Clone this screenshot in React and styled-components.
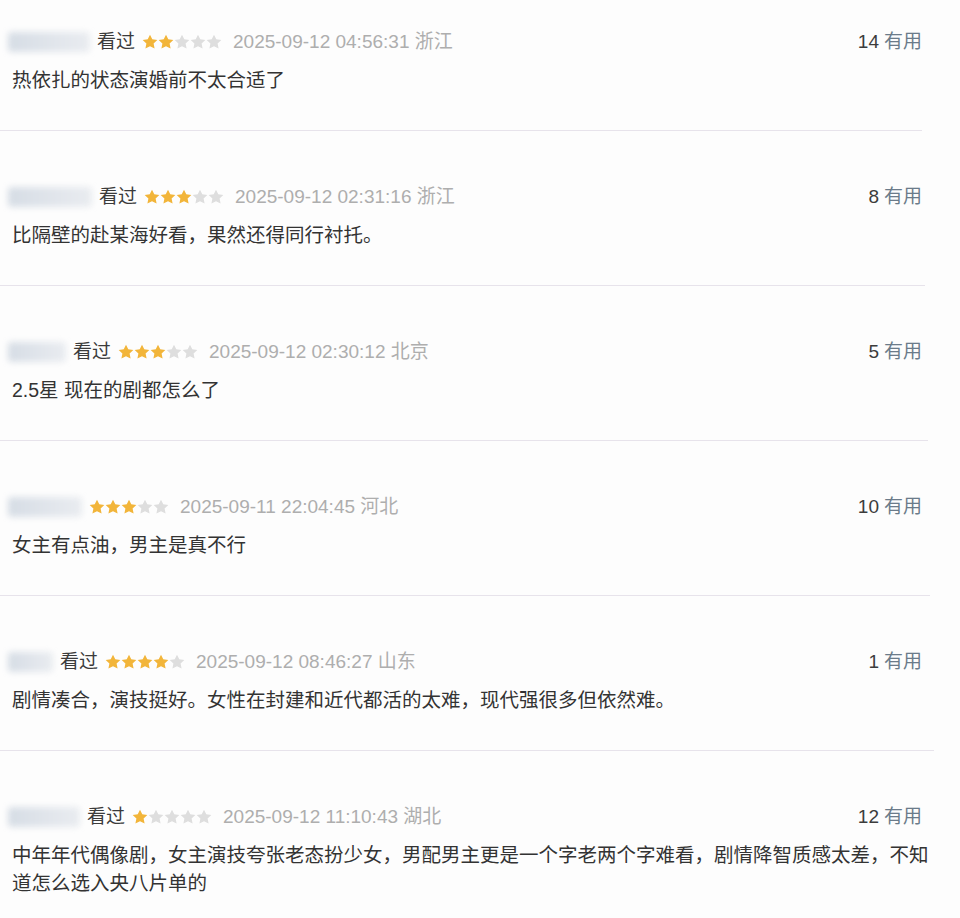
import React from "react";
import styled, { createGlobalStyle } from "styled-components";

const Global = createGlobalStyle`
  html, body { margin: 0; padding: 0; background: #fdfdfd; }
  body { font-family: "Liberation Sans", "Noto Sans CJK SC", sans-serif; }
`;

const List = styled.div`
  width: 960px;
  display: flex;
  flex-direction: column;
`;

const Row = styled.div`
  width: 925px;
  box-sizing: border-box;
  padding: ${(p) => (p.$first ? 29 : 53)}px 3px ${(p) => (p.$last ? 20 : 36)}px 12px;
  display: flex;
  flex-direction: column;
  gap: 11px;
`;

const Divider = styled.div`
  width: ${(p) => p.$w}px;
  height: 1px;
  background: #e7e3eb;
`;

const Header = styled.div`
  display: flex;
  align-items: center;
  height: 26px;
  font-size: 19px;
  line-height: 26px;
`;

const Meta = styled.div`
  display: flex;
  align-items: center;
  gap: 7px;
  flex: 1;
`;

const Blur = styled.div`
  width: ${(p) => p.$w}px;
  height: 20px;
  margin-left: -4px;
  border-radius: 4px;
  background: linear-gradient(90deg, #d6dde5 0%, #e2e6ec 60%, #e9ecf0 100%);
  filter: blur(3px);
`;

const Watched = styled.span`
  color: #3b3b3b;
`;

const Stars = styled.span`
  display: inline-flex;
  margin-right: 4px;
`;

const DateText = styled.span`
  color: #aeaeae;
`;

const Useful = styled.div`
  display: flex;
  align-items: center;
  gap: 5px;
`;

const Count = styled.span`
  color: #3c3c3c;
`;

const UsefulLabel = styled.span`
  color: #6b7b8a;
`;

const Comment = styled.div`
  font-size: 19.5px;
  line-height: 28px;
  color: #333;
  width: 925px;
`;

const Star = ({ on }) => (
  <svg width="16" height="16" viewBox="0 0 24 24">
    <path
      d="M12 1l3.4 7 7.6 1-5.6 5.3 1.5 7.6L12 18.2l-6.9 3.7 1.5-7.6L1 9l7.6-1z"
      fill={on ? "#f2b53a" : "#dedede"}
    />
  </svg>
);

const data = [
  { w: 82, watched: true, stars: 2, date: "2025-09-12 04:56:31", region: "浙江", count: 14, text: "热依扎的状态演婚前不太合适了", lw: 922 },
  { w: 84, watched: true, stars: 3, date: "2025-09-12 02:31:16", region: "浙江", count: 8, text: "比隔壁的赴某海好看，果然还得同行衬托。", lw: 925 },
  { w: 58, watched: true, stars: 3, date: "2025-09-12 02:30:12", region: "北京", count: 5, text: "2.5星 现在的剧都怎么了", lw: 928 },
  { w: 74, watched: false, stars: 3, date: "2025-09-11 22:04:45", region: "河北", count: 10, text: "女主有点油，男主是真不行", lw: 930 },
  { w: 45, watched: true, stars: 4, date: "2025-09-12 08:46:27", region: "山东", count: 1, text: "剧情凑合，演技挺好。女性在封建和近代都活的太难，现代强很多但依然难。", lw: 934 },
  { w: 72, watched: true, stars: 1, date: "2025-09-12 11:10:43", region: "湖北", count: 12, text: "中年年代偶像剧，女主演技夸张老态扮少女，男配男主更是一个字老两个字难看，剧情降智质感太差，不知道怎么选入央八片单的", lw: 934 },
];

export default function App() {
  return (
    <>
      <Global />
      <List>
        {data.map((r, i) => {
          const last = i === data.length - 1;
          return (
            <React.Fragment key={i}>
              <Row $first={i === 0} $last={last}>
                <Header>
                  <Meta>
                    <Blur $w={r.w} />
                    {r.watched && <Watched>看过</Watched>}
                    <Stars>
                      {[0, 1, 2, 3, 4].map((s) => (
                        <Star key={s} on={s < r.stars} />
                      ))}
                    </Stars>
                    <DateText>
                      {r.date} {r.region}
                    </DateText>
                  </Meta>
                  <Useful>
                    <Count>{r.count}</Count>
                    <UsefulLabel>有用</UsefulLabel>
                  </Useful>
                </Header>
                <Comment>{r.text}</Comment>
              </Row>
              {!last && <Divider $w={r.lw} />}
            </React.Fragment>
          );
        })}
      </List>
    </>
  );
}
